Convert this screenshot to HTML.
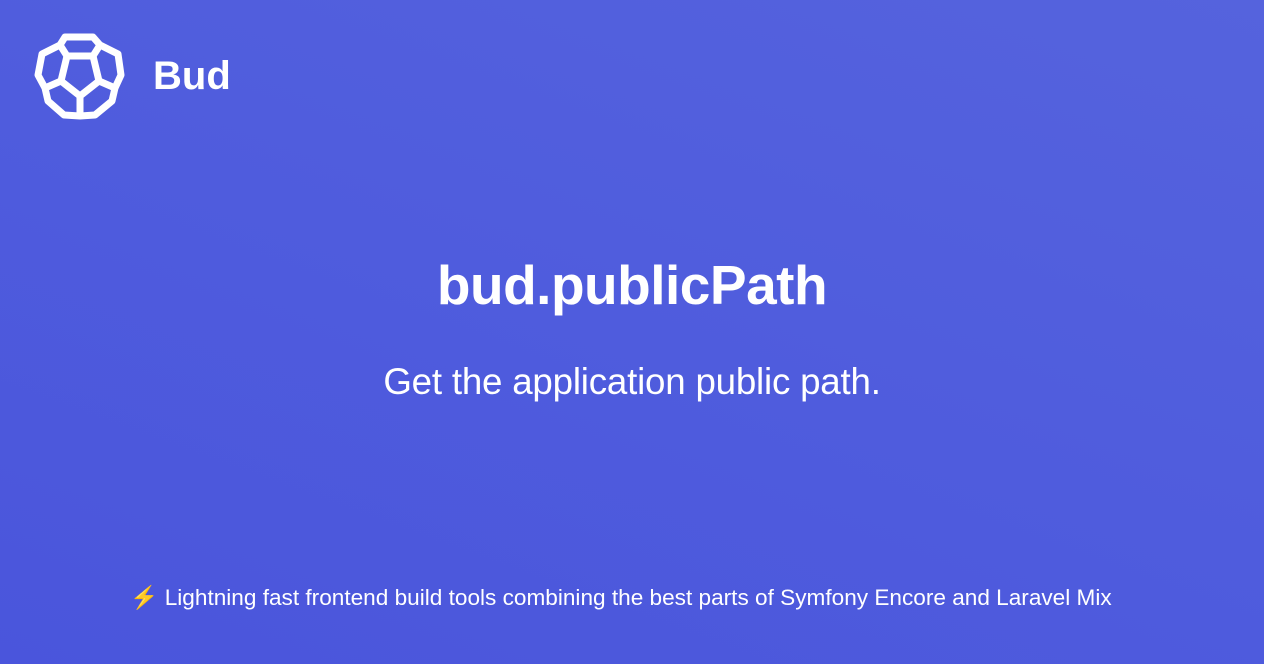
<!DOCTYPE html>
<html><head><meta charset="utf-8"><style>
html,body{margin:0;padding:0}
body{width:1264px;height:664px;overflow:hidden;position:relative;background:linear-gradient(20deg,#4a55dc 0%,#4f5cdd 50%,#5563dd 100%);font-family:"Liberation Sans",sans-serif;color:#fff}
.t{position:absolute;left:0;width:1264px;text-align:center;white-space:nowrap}
</style></head><body>
<svg style="position:absolute;left:0;top:0" width="140" height="140" viewBox="0 0 140 140">
<g fill="none" stroke="#fff" stroke-width="7" stroke-linejoin="round">
<polygon points="65,37 93,37 100,45 118,54 121,75 115,88 112,101 95,115 80,116 64,115 48,101 45,88 38,75 42,54 60,45"/>
<polygon points="67,56 93,56 99,81 80,96 61,81"/>
<path d="M67,56L60,45M93,56L100,45M99,81L115,88M80,96L80,116M61,81L45,88"/>
</g></svg>
<div style="position:absolute;left:153px;top:54px;font-size:40px;font-weight:bold">Bud</div>
<div class="t" style="top:253px;font-size:55px;font-weight:bold;letter-spacing:-0.5px">bud.publicPath</div>
<div class="t" style="top:361px;font-size:36.7px;letter-spacing:-0.2px">Get the application public path.</div>
<div class="t" style="top:584px;font-size:22.6px;left:-11px">⚡ Lightning fast frontend build tools combining the best parts of Symfony Encore and Laravel Mix</div>
</body></html>
